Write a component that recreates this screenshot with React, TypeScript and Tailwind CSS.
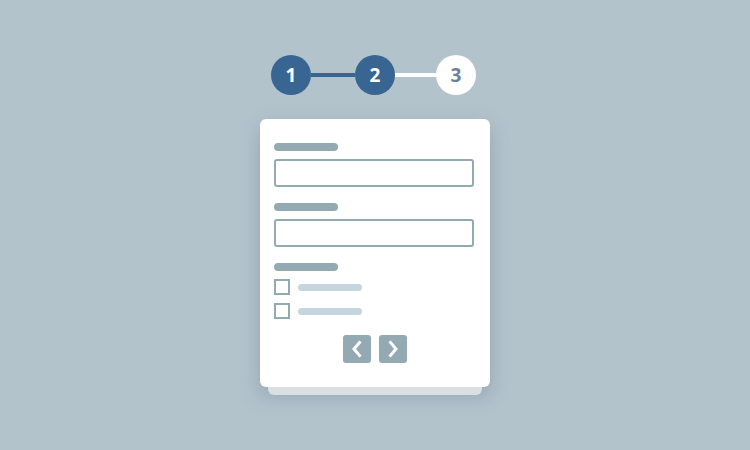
const Field = () => (
  <div className="flex flex-col gap-2">
    <div className="h-2 w-16 rounded-full bg-[#94aab2]" />
    <div className="h-7 w-[200px] rounded-[3px] border-2 border-[#94aab2]" />
  </div>
);

const Check = () => (
  <div className="flex items-center gap-2">
    <div className="h-4 w-4 border-2 border-[#94aab2]" />
    <div className="h-[7px] w-16 rounded-full bg-[#c5d6de]" />
  </div>
);

const Step = ({ n, done }: { n: number; done: boolean }) => (
  <div
    className={
      done
        ? "flex h-10 w-10 items-center justify-center rounded-full bg-[#386592] text-[19px] font-bold text-white"
        : "flex h-10 w-10 items-center justify-center rounded-full bg-white text-[19px] font-bold text-[#6a8199]"
    }
  >
    {n}
  </div>
);

const Chevron = ({ left }: { left?: boolean }) => (
  <svg width="28" height="28" viewBox="0 0 28 28">
    <path
      d={left ? "M16.5 7.5 L11 14 L16.5 20.5" : "M11.5 7.5 L17 14 L11.5 20.5"}
      fill="none"
      stroke="white"
      strokeWidth="3"
      strokeLinecap="square"
    />
  </svg>
);

export default function App() {
  return (
    <div
      className="flex h-[450px] w-[750px] flex-col items-center bg-[#b3c3cc] pt-[55px]"
      style={{ fontFamily: '"Open Sans", "DejaVu Sans", sans-serif' }}
    >
      {/* stepper */}
      <div className="mr-[3px] flex items-center">
        <Step n={1} done />
        <div className="h-1 w-11 bg-[#386592]" />
        <Step n={2} done />
        <div className="h-1 w-[41px] bg-white" />
        <Step n={3} done={false} />
      </div>

      {/* card */}
      <div className="mt-6 flex flex-col items-center">
        <div className="flex w-[230px] flex-col rounded-md bg-white px-[14px] py-6 shadow-[0_8px_20px_rgba(70,95,110,0.3)]">
          <Field />
          <div className="mt-4">
            <Field />
          </div>
          <div className="mt-4 flex flex-col gap-2">
            <div className="h-2 w-16 rounded-full bg-[#94aab2]" />
            <Check />
            <Check />
          </div>
          <div className="mt-4 flex justify-center gap-2">
            <div className="h-7 w-7 rounded-[3px] bg-[#94aab2]">
              <Chevron left />
            </div>
            <div className="h-7 w-7 rounded-[3px] bg-[#94aab2]">
              <Chevron />
            </div>
          </div>
        </div>
        <div className="relative h-2 w-[214px] rounded-b-md bg-[#dadfe2]" />
      </div>
    </div>
  );
}
